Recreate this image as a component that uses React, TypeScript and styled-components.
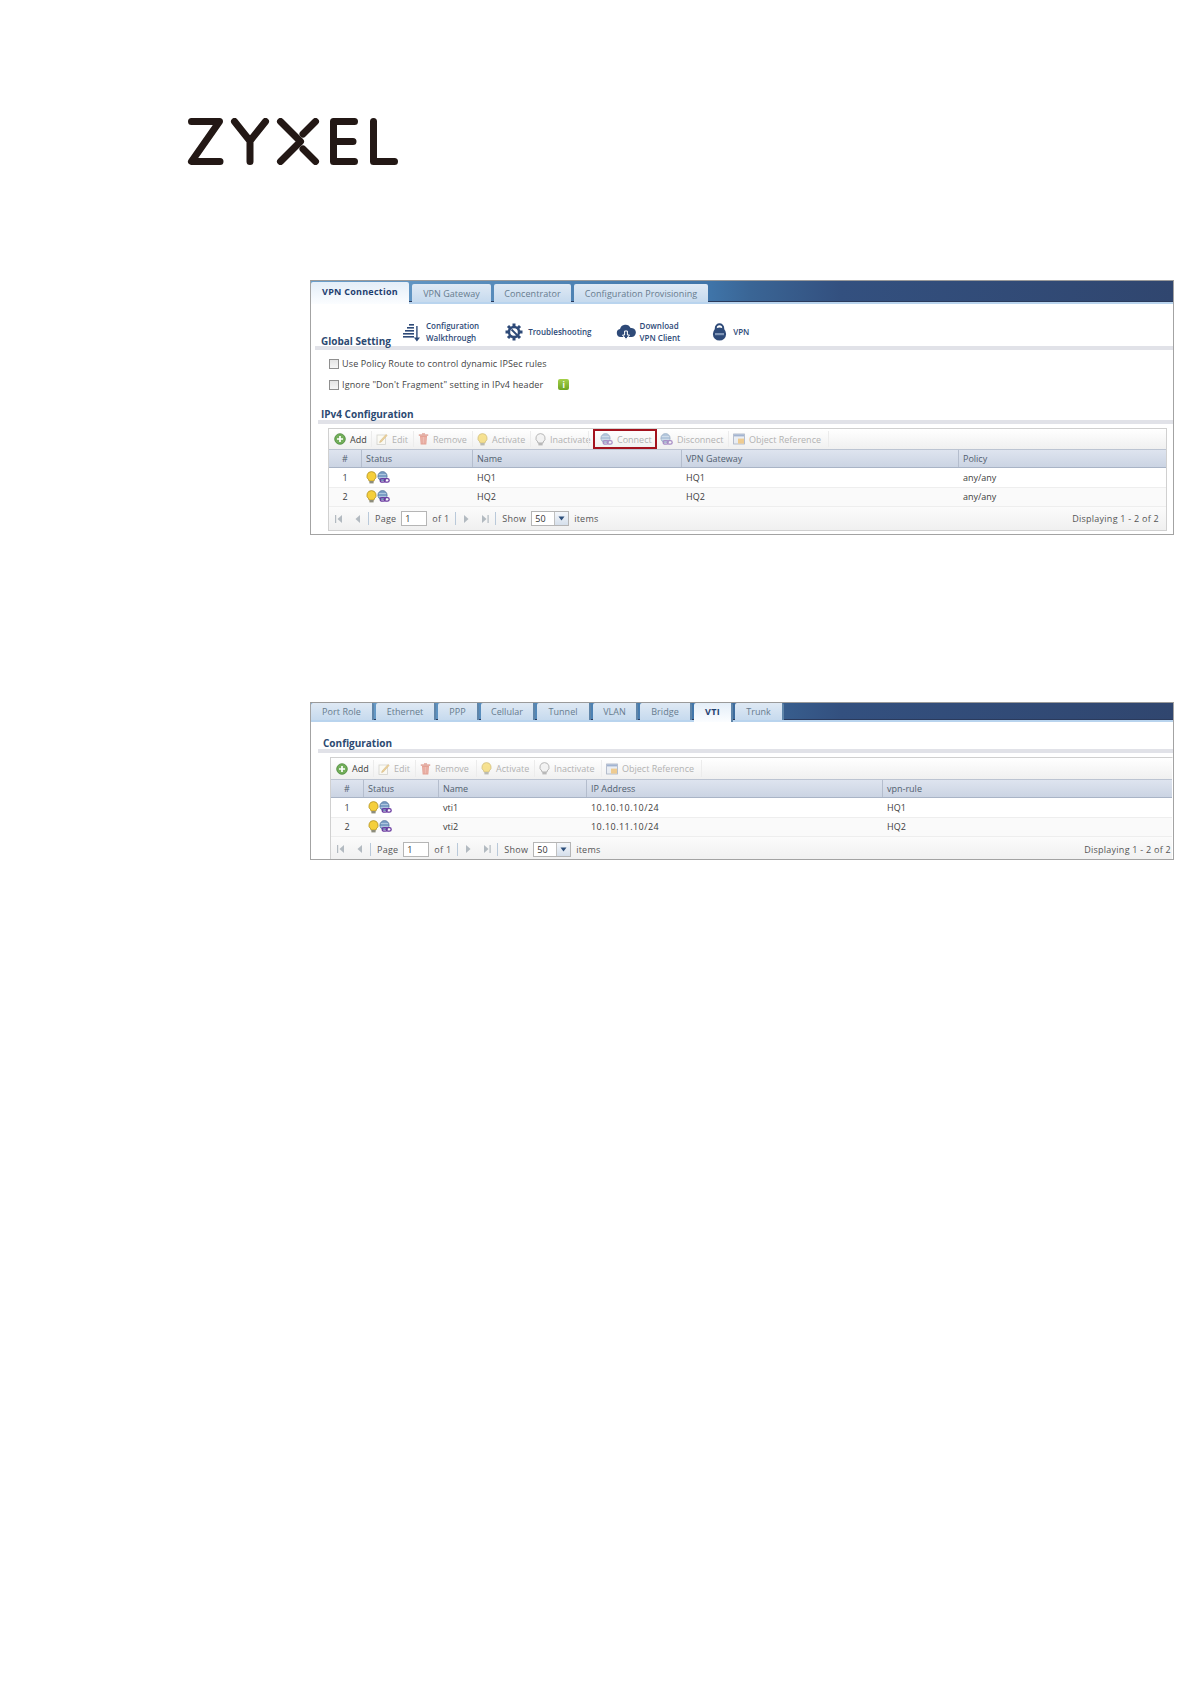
import React from "react";
import styled, { createGlobalStyle } from "styled-components";

const Global = createGlobalStyle`
  html, body { margin: 0; padding: 0; background: #fff; }
  body { font-family: "Open Sans", "Liberation Sans", sans-serif; font-size: 9px; color: #3a3a3a; }
`;

const Page = styled.div`
  width: 1191px;
  min-height: 1684px;
  box-sizing: border-box;
  padding-top: 118px;
`;
const LogoWrap = styled.div`
  padding-left: 187px;
  height: 162px;
  line-height: 0;
`;
const Panel = styled.section<{ $h: number; $mt?: number }>`
  margin-left: 310px;
  margin-top: ${(p) => p.$mt ?? 0}px;
  width: 864px;
  height: ${(p) => p.$h}px;
  box-sizing: border-box;
  border: 1px solid #a3a3a3;
  border-top: 1px solid #9a9a9a;
  background: #fff;
  overflow: hidden;
`;
const TabBar = styled.div<{ $h: number; $gap: number }>`
  height: ${(p) => p.$h}px;
  box-sizing: border-box;
  display: flex;
  align-items: flex-end;
  gap: ${(p) => p.$gap}px;
  background: linear-gradient(90deg, #6b9fcb 0, #3f74a8 400px, #3a6595 440px, #33507f 530px, #30466f 100%);
  border-bottom: 2px solid #b9d4ee;
  box-shadow: inset 0 -1px 0 #2a3a5c;
`;
const Tab = styled.div<{ $w: number; $active?: boolean; $edge?: boolean; $inset: number }>`
  width: ${(p) => p.$w}px;
  height: ${(p) => (p.$active ? `calc(100% + 2px - ${p.$inset > 0 ? 1 : 0}px)` : `calc(100% - ${p.$inset}px)`)};
  margin-bottom: ${(p) => (p.$active ? -2 : 0)}px;
  padding-bottom: ${(p) => (p.$active ? 3 : 0)}px;
  box-sizing: border-box;
  display: flex;
  align-items: center;
  justify-content: center;
  font-size: 9px;
  white-space: nowrap;
  letter-spacing: ${(p) => (p.$active ? 0.25 : 0.05)}px;
  color: ${(p) => (p.$active ? "#1f4070" : "#667b8e")};
  font-weight: ${(p) => (p.$active ? 700 : 400)};
  background: ${(p) =>
    p.$active ? "linear-gradient(#e4eef8, #fbfdff)" : "linear-gradient(#dfe9f4, #c6daee)"};
  border-right: ${(p) => (p.$edge ? "2px solid #5f85a9" : "none")};
  border-top-left-radius: 2px;
  border-top-right-radius: 2px;
`;
const SectionHead = styled.div<{ $h: number; $ml: number }>`
  height: ${(p) => p.$h}px;
  margin-left: ${(p) => p.$ml}px;
  box-sizing: border-box;
  display: flex;
  align-items: flex-end;
  border-bottom: 4px solid #e1e2e8;
`;
const SectionTitle = styled.h3<{ $pl: number; $w?: number; $mb: number }>`
  margin: 0 0 ${(p) => p.$mb}px;
  padding-left: ${(p) => p.$pl}px;
  width: ${(p) => (p.$w ? `${p.$w}px` : "auto")};
  box-sizing: border-box;
  flex: none;
  font-size: 10px;
  line-height: 10px;
  font-weight: 700;
  color: #2c4a72;
  white-space: nowrap;
`;
const Helpers = styled.div`
  display: flex;
  align-items: center;
  gap: 26px;
  height: 100%;
  padding-top: 14px;
  box-sizing: border-box;
`;
const Helper = styled.div<{ $gap: number; $ml?: number }>`
  display: flex;
  align-items: center;
  gap: ${(p) => p.$gap}px;
  margin-left: ${(p) => p.$ml ?? 0}px;
  font-size: 8px;
  line-height: 12px;
  font-weight: 600;
  color: #2e4a78;
  white-space: nowrap;
`;
const Options = styled.div`
  padding: 3px 0 0 18px;
`;
const Option = styled.label`
  height: 21px;
  display: flex;
  align-items: center;
  gap: 3px;
  font-size: 9px;
  letter-spacing: 0.14px;
  color: #444;
  white-space: nowrap;
`;
const Check = styled.span`
  width: 10px;
  height: 10px;
  box-sizing: border-box;
  border: 1px solid #8f8f8f;
  background: linear-gradient(#e4e4e4, #f6f6f6);
`;
const Info = styled.span`
  margin-left: 12px;
  width: 11px;
  height: 11px;
  border-radius: 2px;
  background: linear-gradient(#a5d04a, #6ea521);
  color: #fff;
  font-size: 8px;
  font-weight: 700;
  line-height: 11px;
  text-align: center;
`;
const Grid = styled.div<{ $ml: number; $mr: number; $mt: number }>`
  margin: ${(p) => p.$mt}px ${(p) => p.$mr}px 0 ${(p) => p.$ml}px;
  border: 1px solid #d0d0d0;
  border-right-color: ${(p) => (p.$mr ? "#d0d0d0" : "transparent")};
`;
const Toolbar = styled.div<{ $h: number }>`
  height: ${(p) => p.$h}px;
  display: flex;
  align-items: center;
  padding-left: 5px;
  background: linear-gradient(#ffffff, #f0f0f0);
`;
const ToolButton = styled.div<{ $off?: boolean; $hot?: boolean; $w: number }>`
  position: relative;
  width: ${(p) => p.$w}px;
  height: 100%;
  box-sizing: border-box;
  flex: none;
  display: flex;
  align-items: center;
  gap: 4px;
  padding-left: ${(p) => (p.$hot ? 7 : 0)}px;
  margin-right: ${(p) => (p.$hot ? 3 : 0)}px;
  font-size: 9px;
  white-space: nowrap;
  color: ${(p) => (p.$off ? "#b2b2b2" : "#3d3d3d")};
  ${(p) => (p.$hot ? "outline: 2px solid #a3121e; outline-offset: -2px;" : "")}
  & > svg { opacity: ${(p) => (p.$off ? 0.55 : 1)}; flex: none; }
  &::after {
    content: "";
    position: absolute;
    top: 2px;
    bottom: 2px;
    right: 4px;
    width: 1px;
    background: ${(p) => (p.$hot ? "transparent" : "#ececec")};
  }
`;
const GridRow = styled.div<{ $cols: string; $alt?: boolean; $head?: boolean }>`
  display: grid;
  grid-template-columns: ${(p) => p.$cols};
  align-items: center;
  box-sizing: border-box;
  height: ${(p) => (p.$head ? 19 : 19.5)}px;
  font-size: 9px;
  color: ${(p) => (p.$head ? "#51606f" : "#3c3c3c")};
  background: ${(p) =>
    p.$head ? "linear-gradient(#dee4ef, #cbd4e3)" : p.$alt ? "#fafafa" : "#fff"};
  border-bottom: 1px solid ${(p) => (p.$head ? "#a9b4c6" : "#eeeeee")};
  border-top: ${(p) => (p.$head ? "1px solid #bcc4d2" : "none")};
`;
const Cell = styled.div<{ $center?: boolean; $head?: boolean; $wide?: boolean }>`
  height: 100%;
  display: flex;
  align-items: center;
  padding-left: ${(p) => (p.$center ? 0 : 4)}px;
  justify-content: ${(p) => (p.$center ? "center" : "flex-start")};
  border-left: ${(p) => (p.$head ? "1px solid #b4bdcd" : "1px solid transparent")};
  letter-spacing: ${(p) => (p.$wide ? 0.45 : 0)}px;
  white-space: nowrap;
  &:first-child { border-left: none; }
`;
const Paging = styled.div<{ $h: number; $pr: number }>`
  height: ${(p) => p.$h}px;
  display: flex;
  align-items: center;
  padding: 0 ${(p) => p.$pr}px 0 6px;
  font-size: 9px;
  letter-spacing: 0.25px;
  color: #555;
  background: linear-gradient(#fbfbfb, #f0f0f0);
`;
const PageIcons = styled.span`
  display: flex;
  align-items: center;
  gap: 9px;
  opacity: 0.55;
`;
const Sep = styled.span`
  width: 1px;
  height: 13px;
  margin: 0 6px;
  background: #b9c9da;
`;
const Field = styled.span<{ $w: number }>`
  width: ${(p) => p.$w}px;
  height: 15px;
  box-sizing: border-box;
  margin: 0 5px;
  padding-left: 3px;
  line-height: 13px;
  border: 1px solid #b5b5b5;
  background: #fff;
  color: #333;
  display: flex;
  align-items: center;
  justify-content: space-between;
`;
const Arrow = styled.span`
  width: 13px;
  height: 13px;
  display: flex;
  align-items: center;
  justify-content: center;
  background: linear-gradient(#f4f7fb, #d5dfeb);
  border-left: 1px solid #c0c0c0;
`;
const Grow = styled.span`
  flex: 1;
`;

const Logo = () => (
  <svg width="212" height="47" viewBox="0 0 212 47" fill="none" stroke="#231815" strokeWidth="7" strokeLinecap="round" strokeLinejoin="round">
    <path d="M4.5 3.5H32.5L4.5 43.5H33" />
    <path d="M47.5 3.5L63 23V43.5M78.5 3.5L63 23" />
    <path d="M93.5 3.5L113.5 23.5L93.5 43.5" />
    <path d="M128.5 3.5L116 16M116 31L128.5 43.5" />
    <path d="M146.5 3.5H167.5M146.5 3.5V43.5H167.5M146.5 23.5H166" />
    <path d="M186.5 3.5V43.5H207.5" />
  </svg>
);

const Bulb = () => (
  <svg width="11" height="13" viewBox="0 0 11 13">
    <path d="M5.5 .6a4.6 4.6 0 0 1 2.6 8.4v1H2.9V9A4.6 4.6 0 0 1 5.5 .6z" fill="#f5cf3c" stroke="#b2942b" strokeWidth=".8" />
    <rect x="3.4" y="10" width="4.2" height="2.4" fill="#8d8d7c" />
  </svg>
);
const BulbOff = () => (
  <svg width="11" height="13" viewBox="0 0 11 13">
    <path d="M5.5 .6a4.6 4.6 0 0 1 2.6 8.4v1H2.9V9A4.6 4.6 0 0 1 5.5 .6z" fill="#eee" stroke="#777" strokeWidth=".9" />
    <rect x="3.4" y="10" width="4.2" height="2.4" fill="#888" />
  </svg>
);
const LinkGlobe = () => (
  <svg width="13" height="13" viewBox="0 0 13 13">
    <circle cx="5.5" cy="5.2" r="4.6" fill="#7b9fc6" stroke="#4b6d96" strokeWidth=".7" />
    <path d="M2 3.5h7M1.5 6.5h8" stroke="#c4d7ea" strokeWidth=".7" />
    <rect x="3.2" y="7.6" width="5" height="3.6" rx="1.8" fill="none" stroke="#6a3aa0" strokeWidth="1.3" />
    <rect x="7.2" y="7.6" width="5" height="3.6" rx="1.8" fill="none" stroke="#6a3aa0" strokeWidth="1.3" />
  </svg>
);
const AddIcon = () => (
  <svg width="12" height="12" viewBox="0 0 12 12">
    <circle cx="6" cy="6" r="5.3" fill="#72ae5a" stroke="#4d8a3b" strokeWidth=".8" />
    <path d="M6 3v6M3 6h6" stroke="#fff" strokeWidth="1.7" />
  </svg>
);
const EditIcon = () => (
  <svg width="12" height="12" viewBox="0 0 12 12">
    <rect x="1" y="2" width="8.5" height="9.4" fill="#fffdf2" stroke="#b7b7b0" strokeWidth=".8" />
    <path d="M4 8L10 1.4l1.2 1L5.3 9 3.6 9.6z" fill="#e6b24a" stroke="#b08530" strokeWidth=".5" />
  </svg>
);
const TrashIcon = () => (
  <svg width="11" height="12" viewBox="0 0 11 12">
    <path d="M2 3h7l-.7 8.4H2.7z" fill="#d65a43" />
    <rect x=".8" y="1.4" width="9.4" height="1.4" fill="#c9513c" />
    <rect x="4" y=".3" width="3" height="1.2" fill="#c9513c" />
    <path d="M4 4v6.5M5.5 4v6.5M7 4v6.5" stroke="#f0b4a6" strokeWidth=".6" />
  </svg>
);
const RefIcon = () => (
  <svg width="12" height="12" viewBox="0 0 12 12">
    <rect x=".6" y="1" width="10.8" height="10" fill="#dfe6f0" stroke="#66789a" strokeWidth=".8" />
    <rect x="1" y="1.4" width="10" height="2" fill="#5c7bb0" />
    <rect x="5" y="5.6" width="6" height="5" fill="#e9a93f" />
  </svg>
);
const SolidChevron = ({ dir, bar }: { dir: "l" | "r"; bar?: boolean }) => (
  <svg width="9" height="10" viewBox="0 0 9 10" fill="#7d8a96">
    {dir === "l" ? <path d="M7 1v8L2.5 5z" /> : <path d="M2 1v8l4.5-4z" />}
    {bar && <rect x={dir === "l" ? 0 : 7.5} y="1" width="1.2" height="8" />}
  </svg>
);
const Caret = () => (
  <svg width="7" height="5" viewBox="0 0 7 5" fill="#2d4f7b">
    <path d="M.5 .5h6L3.5 4.5z" />
  </svg>
);

const WalkIcon = () => (
  <svg width="17" height="19" viewBox="0 0 17 19" fill="#2e4a78">
    <rect x="6" y="1" width="5" height="1.6" />
    <rect x="4" y="4" width="7" height="1.6" />
    <rect x="2" y="7" width="9" height="1.6" />
    <rect x="0" y="10" width="11" height="1.6" />
    <rect x="0" y="13" width="11" height="1.6" />
    <path d="M13.2 3h1.4v11.5H17l-3.1 4-3-4h2.3z" />
  </svg>
);
const GearIcon = () => (
  <svg width="18" height="18" viewBox="0 0 18 18">
    <g stroke="#2e4a78" strokeWidth="3">
      <path d="M9 .5v17M.5 9h17M3 3l12 12M15 3L3 15" />
    </g>
    <circle cx="9" cy="9" r="6.3" fill="#2e4a78" />
    <circle cx="9" cy="9" r="3.8" fill="#fff" />
    <path d="M6.5 6.5l5.5 5.5" stroke="#2e4a78" strokeWidth="1.8" />
  </svg>
);
const CloudIcon = () => (
  <svg width="20" height="16" viewBox="0 0 20 16">
    <path d="M4.5 13A4 4 0 0 1 4 5.1 5.6 5.6 0 0 1 14.6 4 4.5 4.5 0 0 1 16 13z" fill="#2e4a78" />
    <path d="M8.6 7h2.8v4h2.1L10 15.4 6.5 11h2.1z" fill="#2e4a78" stroke="#fff" strokeWidth="1" />
  </svg>
);
const LockIcon = () => (
  <svg width="15" height="18" viewBox="0 0 15 18">
    <path d="M3.8 8V5a3.7 3.7 0 0 1 7.4 0v3" fill="none" stroke="#2e4a78" strokeWidth="2" />
    <circle cx="7.5" cy="11" r="6.6" fill="#2e4a78" />
    <rect x="3" y="10" width="9" height="2.2" fill="#7f95b6" />
  </svg>
);

type Tool = { label: string; icon: React.ReactNode; w: number; off?: boolean; hot?: boolean };
type TabDef = { label: string; w: number; active?: boolean };

const Pager = ({ inputW, display }: { inputW: number; display: string }) => (
  <>
    <PageIcons>
      <SolidChevron dir="l" bar />
      <SolidChevron dir="l" />
    </PageIcons>
    <Sep />
    Page
    <Field $w={inputW}>1</Field>
    of 1
    <Sep />
    <PageIcons>
      <SolidChevron dir="r" />
      <SolidChevron dir="r" bar />
    </PageIcons>
    <Sep />
    Show
    <Field $w={38}>
      50
      <Arrow>
        <Caret />
      </Arrow>
    </Field>
    items
    <Grow />
    {display}
  </>
);

const RowStatus = () => (
  <>
    <Bulb />
    <LinkGlobe />
  </>
);

const tabsA: TabDef[] = [
  { label: "VPN Connection", w: 98, active: true },
  { label: "VPN Gateway", w: 79 },
  { label: "Concentrator", w: 77 },
  { label: "Configuration Provisioning", w: 134 },
];
const tabsB: TabDef[] = [
  { label: "Port Role", w: 63 },
  { label: "Ethernet", w: 60 },
  { label: "PPP", w: 41 },
  { label: "Cellular", w: 54 },
  { label: "Tunnel", w: 54 },
  { label: "VLAN", w: 45 },
  { label: "Bridge", w: 52 },
  { label: "VTI", w: 39, active: true },
  { label: "Trunk", w: 49 },
];
const toolsA: Tool[] = [
  { label: "Add", icon: <AddIcon />, w: 42 },
  { label: "Edit", icon: <EditIcon />, w: 42, off: true },
  { label: "Remove", icon: <TrashIcon />, w: 59, off: true },
  { label: "Activate", icon: <Bulb />, w: 58, off: true },
  { label: "Inactivate", icon: <BulbOff />, w: 58, off: true },
  { label: "Connect", icon: <LinkGlobe />, w: 64, off: true, hot: true },
  { label: "Disconnect", icon: <LinkGlobe />, w: 73, off: true },
  { label: "Object Reference", icon: <RefIcon />, w: 100, off: true },
];
const toolsB: Tool[] = [
  { label: "Add", icon: <AddIcon />, w: 42 },
  { label: "Edit", icon: <EditIcon />, w: 42, off: true },
  { label: "Remove", icon: <TrashIcon />, w: 61, off: true },
  { label: "Activate", icon: <Bulb />, w: 58, off: true },
  { label: "Inactivate", icon: <BulbOff />, w: 67, off: true },
  { label: "Object Reference", icon: <RefIcon />, w: 100, off: true },
];

const colsA = "32px 111px 209px 277px 1fr";
const colsB = "32px 75px 148px 296px 1fr";

const Tabs = ({ items, h, gap, inset, edge }: { items: TabDef[]; h: number; gap: number; inset: number; edge?: boolean }) => (
  <TabBar $h={h} $gap={gap}>
    {items.map((t) => (
      <Tab key={t.label} $w={t.w} $active={t.active} $edge={edge} $inset={inset}>
        {t.label}
      </Tab>
    ))}
  </TabBar>
);
const Tools = ({ items, h }: { items: Tool[]; h: number }) => (
  <Toolbar $h={h}>
    {items.map((t) => (
      <ToolButton key={t.label} $w={t.w} $off={t.off} $hot={t.hot}>
        {t.icon}
        {t.label}
      </ToolButton>
    ))}
  </Toolbar>
);
const Rows = ({ cols, head, rows, wideCol }: { cols: string; head: string[]; rows: string[][]; wideCol?: number }) => (
  <>
    <GridRow $cols={cols} $head>
      {head.map((h, i) => (
        <Cell key={h} $head $center={i === 0}>
          {h}
        </Cell>
      ))}
    </GridRow>
    {rows.map((r, ri) => (
      <GridRow key={r[0]} $cols={cols} $alt={ri === 1}>
        <Cell $center>{r[0]}</Cell>
        <Cell>
          <RowStatus />
        </Cell>
        {r.slice(1).map((c, i) => (
          <Cell key={i} $wide={i === wideCol}>{c}</Cell>
        ))}
      </GridRow>
    ))}
  </>
);

export default function App() {
  return (
    <Page>
      <Global />
      <LogoWrap>
        <Logo />
      </LogoWrap>
      <Panel $h={255}>
        <Tabs items={tabsA} h={23} gap={3} inset={3} />
        <SectionHead $h={46} $ml={4}>
          <SectionTitle $pl={6} $w={88} $mb={0}>Global Setting</SectionTitle>
          <Helpers>
            <Helper $gap={6}>
              <WalkIcon />
              <span>
                Configuration
                <br />
                Walkthrough
              </span>
            </Helper>
            <Helper $gap={5}>
              <GearIcon />
              Troubleshooting
            </Helper>
            <Helper $gap={4} $ml={-2}>
              <CloudIcon />
              <span>
                Download
                <br />
                VPN Client
              </span>
            </Helper>
            <Helper $gap={6} $ml={6}>
              <LockIcon />
              VPN
            </Helper>
          </Helpers>
        </SectionHead>
        <Options>
          <Option>
            <Check />
            Use Policy Route to control dynamic IPSec rules
          </Option>
          <Option>
            <Check />
            Ignore "Don't Fragment" setting in IPv4 header
            <Info>i</Info>
          </Option>
        </Options>
        <SectionHead $h={29} $ml={7}>
          <SectionTitle $pl={3} $mb={1}>IPv4 Configuration</SectionTitle>
        </SectionHead>
        <Grid $ml={17} $mr={6} $mt={4}>
          <Tools items={toolsA} h={20} />
          <Rows
            cols={colsA}
            head={["#", "Status", "Name", "VPN Gateway", "Policy"]}
            rows={[
              ["1", "HQ1", "HQ1", "any/any"],
              ["2", "HQ2", "HQ2", "any/any"],
            ]}
          />
          <Paging $h={23} $pr={7}>
            <Pager inputW={26} display="Displaying 1 - 2 of 2" />
          </Paging>
        </Grid>
      </Panel>
      <Panel $h={158} $mt={167}>
        <Tabs items={tabsB} h={19} gap={2} inset={0} edge />
        <SectionHead $h={31} $ml={7}>
          <SectionTitle $pl={5} $mb={1}>Configuration</SectionTitle>
        </SectionHead>
        <Grid $ml={19} $mr={0} $mt={4}>
          <Tools items={toolsB} h={21} />
          <Rows
            cols={colsB}
            head={["#", "Status", "Name", "IP Address", "vpn-rule"]}
            rows={[
              ["1", "vti1", "10.10.10.10/24", "HQ1"],
              ["2", "vti2", "10.10.11.10/24", "HQ2"],
            ]}
            wideCol={1}
          />
          <Paging $h={24} $pr={1}>
            <Pager inputW={26} display="Displaying 1 - 2 of 2" />
          </Paging>
        </Grid>
      </Panel>
    </Page>
  );
}
